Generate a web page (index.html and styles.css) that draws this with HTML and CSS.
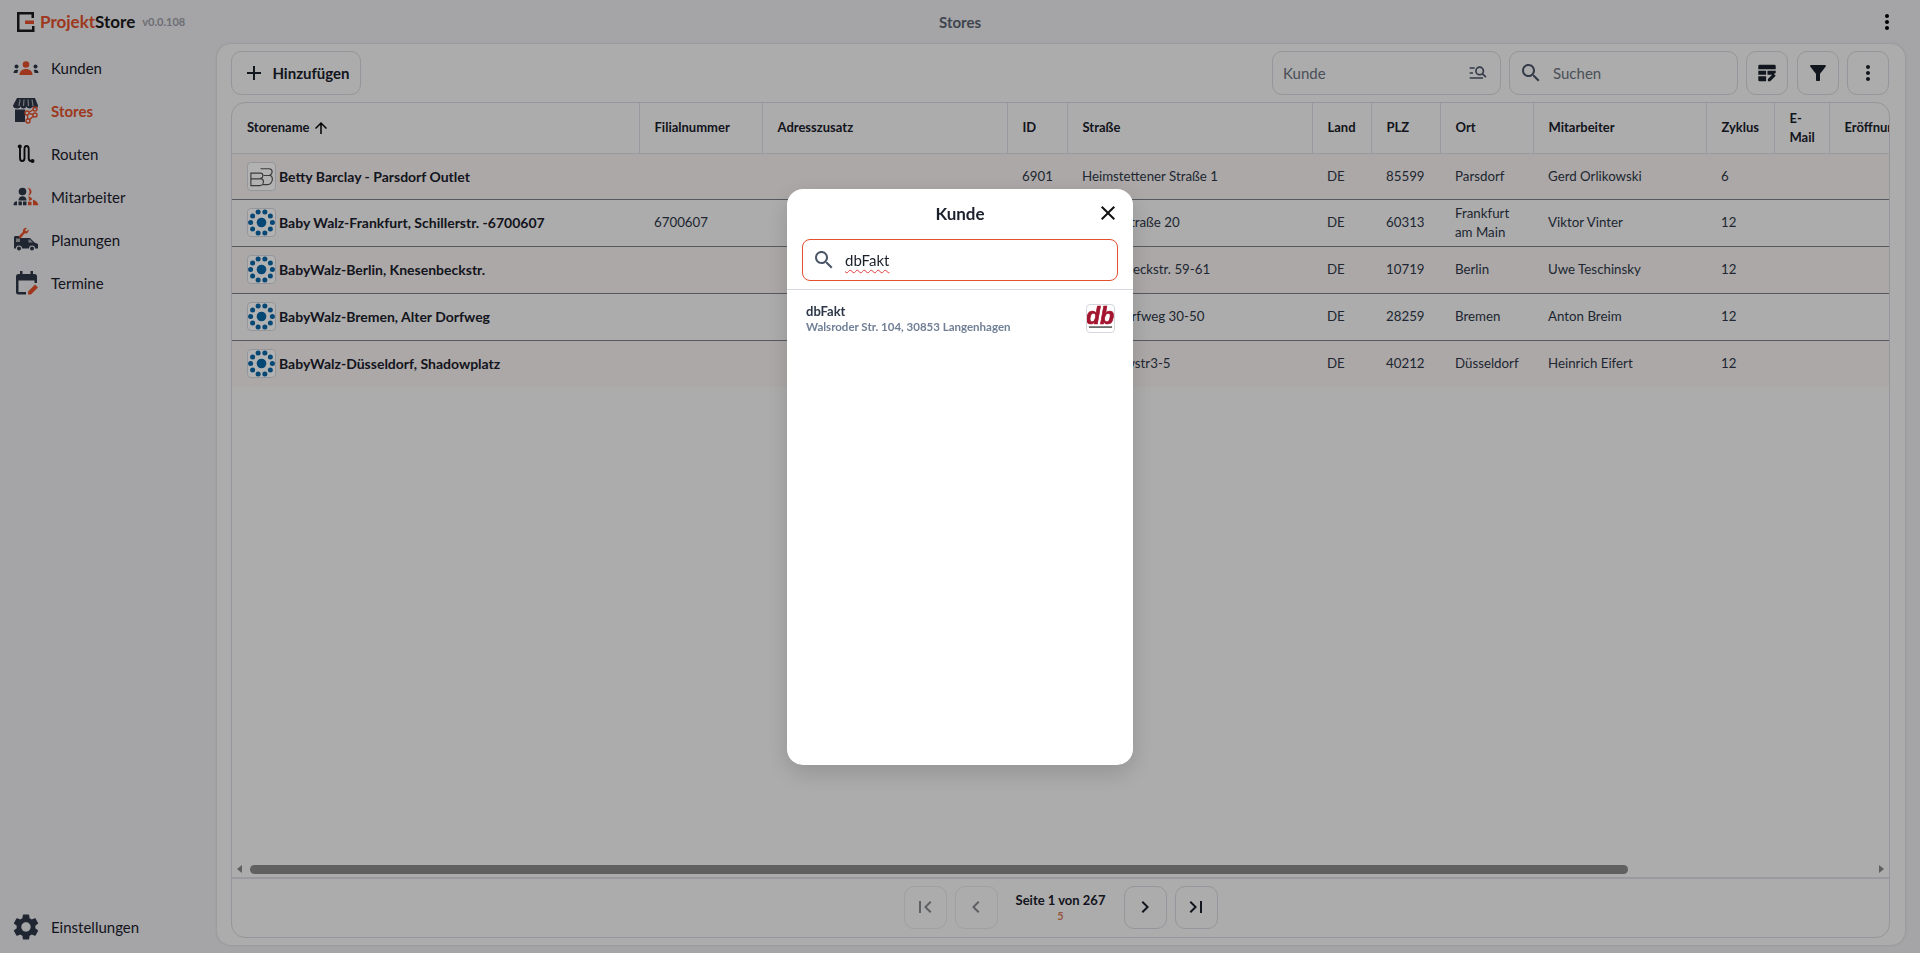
FILE: index.html
```html
<!DOCTYPE html>
<html lang="de">
<head>
    <meta charset="UTF-8">
    <meta name="viewport" content="width=device-width, initial-scale=1.0">
    <title>ProjektStore - Stores</title>
    <link rel="stylesheet" href="styles.css">
</head>
<body>
    <svg class="defs" width="0" height="0">
        <symbol id="babywalz" viewBox="0 0 28 28">
            <circle cx="14" cy="14" r="5"/>
            <circle cx="10.500" cy="3" r="2.600"/><circle cx="17.500" cy="3" r="2.600"/>
            <circle cx="4.800" cy="7.200" r="2.600"/><circle cx="23.200" cy="7.200" r="2.600"/>
            <circle cx="2.700" cy="14" r="2.600"/><circle cx="25.300" cy="14" r="2.600"/>
            <circle cx="4.800" cy="20.800" r="2.600"/><circle cx="23.200" cy="20.800" r="2.600"/>
            <circle cx="10.500" cy="25" r="2.600"/><circle cx="17.500" cy="25" r="2.600"/>
        </symbol>
    </svg>

    <header class="topbar">
        <div class="brand">
            <svg class="brand-logo" viewBox="0 0 20 22" width="20" height="22">
                <path d="M1 1h17v6h-2.500V3.500H3.500v15H16V15h2.500v6H1z" fill="#1a1a1a"/>
                <path d="M9 9.500h9V13H9z" fill="#e2502c"/>
            </svg>
            <span class="brand-name"><span class="accent">Projekt</span>Store</span>
            <span class="brand-version">v0.0.108</span>
        </div>
        <div class="page-title">Stores</div>
        <div class="topbar-menu">
            <svg viewBox="0 0 24 24" width="24" height="24"><path d="M12 8c1.100 0 2-.9 2-2s-.9-2-2-2-2 .9-2 2 .9 2 2 2zm0 2c-1.100 0-2 .9-2 2s.9 2 2 2 2-.9 2-2-.9-2-2-2zm0 6c-1.100 0-2 .9-2 2s.9 2 2 2 2-.9 2-2-.9-2-2-2z"/></svg>
        </div>
    </header>

    <div class="layout">
        <nav class="sidebar">
            <div class="nav-list">
                <a class="nav-item">
                    <svg class="nav-icon" viewBox="0 0 26 26">
                        <circle cx="13" cy="9.500" r="3.300" fill="#e2502c"/>
                        <path d="M6.500 20c0-4 3-6 6.500-6s6.500 2 6.500 6z" fill="#e2502c"/>
                        <circle cx="3.500" cy="11.500" r="2" fill="#2d3748"/><circle cx="22.500" cy="11.500" r="2" fill="#2d3748"/>
                        <path d="M.5 18c0-2.300 1.300-3.300 3-3.300.7 0 1.300.2 1.800.4-.5.9-.8 1.800-.9 2.900zM25.500 18c0-2.300-1.300-3.300-3-3.300-.7 0-1.300.2-1.800.4.5.9.8 1.800.9 2.900z" fill="#2d3748"/>
                    </svg>
                    <span>Kunden</span>
                </a>
                <a class="nav-item active">
                    <svg class="nav-icon" viewBox="0 0 26 26">
                        <path d="M4 0h18l3 7.500c0 2-1.300 3-2.700 3-1.300 0-2.300-.8-2.800-2-.5 1.200-1.600 2-3 2s-2.500-.8-3-2c-.5 1.200-1.600 2-3 2s-2.500-.8-3-2c-.5 1.200-1.500 2-2.800 2C1.300 10.500 0 9.500 0 7.500z" fill="#2d3748"/>
                        <path d="M7 1.500 6 8M11 1.500 10.500 8M15 1.500l.5 6.500M19 1.500 20 8" stroke="#a9a9ad" stroke-width="1.200"/>
                        <path d="M2 11.500h10V24H2z" fill="#2d3748"/>
                        <g fill="none" stroke="#e2502c" stroke-width="1.400">
                            <circle cx="22" cy="11" r="2"/><circle cx="14" cy="15" r="2"/><circle cx="22" cy="17" r="2"/><circle cx="15" cy="23" r="2"/>
                            <path d="M20 12l-4.200 2.200M16 15.300l4 1.200M20.400 18.200l-4 3.400M14.400 17l.4 4"/>
                        </g>
                    </svg>
                    <span>Stores</span>
                </a>
                <a class="nav-item">
                    <svg class="nav-icon" viewBox="0 0 26 26">
                        <path d="M7 6v11c0 2 .8 3 2.200 3s2.300-1 2.300-3V8c0-2 .9-3 2-3 1.300 0 2.200 1 2.200 3v9c0 2 .8 3 2.300 3" fill="none" stroke="#111" stroke-width="1.900"/>
                        <circle cx="6.800" cy="5.500" r="2" fill="#111"/><circle cx="19.500" cy="20" r="2" fill="#111"/>
                    </svg>
                    <span>Routen</span>
                </a>
                <a class="nav-item">
                    <svg class="nav-icon" viewBox="0 0 26 26">
                        <circle cx="9.500" cy="7.500" r="3.800" fill="#2d3748"/>
                        <path d="M14.500 3.500c2.800.6 4 2.300 4 4.300s-1.300 3.500-3.500 4c1-1.100 1.500-2.500 1.500-4 0-1.700-.7-3.100-2-4.300z" fill="#e2502c"/>
                        <path d="M5.500 16.500c0-2.800 1.800-4.300 4-4.300s4 1.500 4 4.300z" fill="#2d3748"/>
                        <path d="M.5 21c0-2.300 1.300-3.700 3.500-3.700v4H1.500c-.6 0-1-.2-1-.3z" fill="#2d3748"/>
                        <path d="M5.500 17.500h3.400v3.800H5.500zM10 17.500h3.500v3.800H10z" fill="#2d3748"/>
                        <path d="M15.500 12.500c2 .2 3.300 1.300 3.800 3l-3.300 1.500c-.1-1.700-.3-3.200-.5-4.500zM15 17.800h3.500v3.500H15zM20 15.800c2.800.6 4.700 2.500 5.500 5.500H20z" fill="#e2502c"/>
                    </svg>
                    <span>Mitarbeiter</span>
                </a>
                <a class="nav-item">
                    <svg class="nav-icon" viewBox="0 0 26 26">
                        <path d="M2 9h4l2 2h9l4.500 4.500 3.500 1.500v4.500h-3a3 3 0 0 0-6 0H9a3 3 0 0 0-6 0H1V10z" fill="#2d3748"/>
                        <path d="M3 11.500h4v3.500H3zM17 12.500h-1.500v3h4.500z" fill="#a9a9ad"/>
                        <circle cx="6" cy="21.500" r="2" fill="#2d3748"/><circle cx="19" cy="21.500" r="2" fill="#2d3748"/>
                        <path d="M5.500 9.500l4.500-4.700C9.500 3 10.500 1 13 .8l1 .2-2 2 1.500 1.500 2-2 .2 1c-.3 2.300-2.300 3.500-4.300 3L7.500 11.500z" fill="#e2502c"/>
                    </svg>
                    <span>Planungen</span>
                </a>
                <a class="nav-item">
                    <svg class="nav-icon" viewBox="0 0 26 26">
                        <path d="M7 1h2.500v3h8V1H20v3h1.500A2.500 2.500 0 0 1 24 6.500V13h-2.500V10.500h-16V22H13v2.500H5.500A2.500 2.500 0 0 1 3 22V6.500A2.500 2.500 0 0 1 5.500 4H7z" fill="#2d3748"/>
                        <path d="M15 24.500v-3l7-7 3 3-7 7z" fill="#e2502c"/>
                    </svg>
                    <span>Termine</span>
                </a>
            </div>
            <a class="nav-item">
                <svg class="nav-icon" viewBox="2 2 20 20" fill="#2d3748"><path d="M19.140 12.940c.04-.3.06-.61.06-.94 0-.32-.02-.64-.07-.94l2.030-1.580c.18-.14.23-.41.12-.61l-1.920-3.320c-.12-.22-.37-.29-.59-.22l-2.390.96c-.5-.38-1.030-.7-1.620-.94l-.36-2.540c-.04-.24-.24-.41-.48-.41h-3.840c-.24 0-.43.17-.47.41l-.36 2.540c-.59.24-1.130.57-1.620.94l-2.390-.96c-.22-.08-.47 0-.59.22L2.740 8.870c-.12.21-.08.47.12.61l2.030 1.580c-.05.3-.09.63-.09.94s.02.64.07.94l-2.030 1.580c-.18.14-.23.41-.12.61l1.920 3.320c.12.22.37.29.59.22l2.390-.96c.5.38 1.030.7 1.620.94l.36 2.540c.05.24.24.41.48.41h3.840c.24 0 .44-.17.47-.41l.36-2.540c.59-.24 1.130-.56 1.620-.94l2.390.96c.22.08.47 0 .59-.22l1.920-3.320c.12-.22.07-.47-.12-.61l-2.010-1.580zM12 15.600c-1.980 0-3.600-1.620-3.600-3.600s1.620-3.600 3.600-3.600 3.600 1.620 3.600 3.600-1.620 3.600-3.600 3.600z"/></svg>
                <span>Einstellungen</span>
            </a>
        </nav>

        <main class="panel">
            <div class="toolbar">
                <button class="btn btn-add">
                    <svg viewBox="0 0 24 24" width="24" height="24"><path d="M19 13h-6v6h-2v-6H5v-2h6V5h2v6h6v2z"/></svg>
                    Hinzufügen
                </button>
                <div class="toolbar-right">
                    <div class="field field-kunde">
                        <span>Kunde</span>
                        <svg viewBox="0 0 24 24" width="20" height="20" fill="none" stroke="#4a5568" stroke-width="2"><path d="M2 6h6M2 12h4M2 18h16"/><circle cx="14" cy="9.500" r="4.500"/><path d="M17.500 13l4 4"/></svg>
                    </div>
                    <div class="field field-search">
                        <svg viewBox="0 0 24 24" width="24" height="24" fill="#4a5568"><path d="M15.500 14h-.79l-.28-.27C15.410 12.590 16 11.110 16 9.500 16 5.910 13.090 3 9.500 3S3 5.910 3 9.500 5.910 16 9.500 16c1.610 0 3.090-.59 4.230-1.570l.27.28v.79l5 4.990L20.490 19l-4.990-5zm-6 0C7.010 14 5 11.990 5 9.500S7.010 5 9.500 5 14 7.010 14 9.500 11.990 14 9.500 14z"/></svg>
                        <span>Suchen</span>
                    </div>
                    <button class="btn btn-icon">
                        <svg viewBox="0 0 24 24" width="22" height="22" fill="#1a202c"><path d="M4 3h16a1.500 1.500 0 0 1 1.500 1.500V8h-19V4.500A1.500 1.500 0 0 1 4 3zM2.500 9.500H11V14H2.500zM12.500 9.500h9v2.500l-4 2h-5zM2.500 15.500H11V21H4a1.500 1.500 0 0 1-1.500-1.500zM13 21v-2.500l6-6 2.500 2.500-6 6z"/></svg>
                    </button>
                    <button class="btn btn-icon btn-filter">
                        <svg viewBox="0 0 24 24" width="24" height="24" fill="#1a202c"><path d="M4.250 5.610C6.270 8.200 10 13 10 13v6c0 .55.45 1 1 1h2c.55 0 1-.45 1-1v-6s3.720-4.800 5.740-7.390C20.250 4.950 19.780 4 18.950 4H5.040c-.83 0-1.300.95-.79 1.610z"/></svg>
                    </button>
                    <button class="btn btn-icon">
                        <svg viewBox="0 0 24 24" width="24" height="24" fill="#1a202c"><path d="M12 8c1.100 0 2-.9 2-2s-.9-2-2-2-2 .9-2 2 .9 2 2 2zm0 2c-1.100 0-2 .9-2 2s.9 2 2 2 2-.9 2-2-.9-2-2-2zm0 6c-1.100 0-2 .9-2 2s.9 2 2 2 2-.9 2-2-.9-2-2-2z"/></svg>
                    </button>
                </div>
            </div>

            <section class="table-box">
                <div class="table-scroll">
                    <table class="stores">
                        <colgroup>
                            <col class="c-name"><col class="c-filial"><col class="c-adr"><col class="c-id"><col class="c-str"><col class="c-land"><col class="c-plz"><col class="c-ort"><col class="c-mit"><col class="c-zyk"><col class="c-mail"><col class="c-open">
                        </colgroup>
                        <thead>
                            <tr>
                                <th><span class="sort">Storename <svg viewBox="0 0 24 24" width="18" height="18"><path d="M4 12l1.410 1.410L11 7.830V20h2V7.830l5.580 5.590L20 12l-8-8-8 8z"/></svg></span></th>
                                <th>Filialnummer</th><th>Adresszusatz</th><th>ID</th><th>Straße</th><th>Land</th><th>PLZ</th><th>Ort</th><th>Mitarbeiter</th><th>Zyklus</th><th>E-Mail</th><th>Eröffnung</th>
                            </tr>
                        </thead>
                        <tbody>
                            <tr>
                                <td><div class="store"><span class="store-logo"><svg viewBox="0 0 28 28" width="27" height="27" fill="none" stroke="#555" stroke-width="1.200"><path d="M3 10.500h10c1.500 0 2.500 1 2.500 2.500s-1 2.500-2.500 3c1.500.3 3 1.500 3 3.500s-1.500 4-3.500 4H3zM3 16.500h10"/><path d="M13 6h9c2 0 3 1.200 3 3.200 0 1.800-1 3-2.500 3.500 1.700.4 2.800 1.800 2.800 4 0 3-2 5.800-5 5.800h-5M16 13h6.500"/></svg></span>Betty Barclay - Parsdorf Outlet</div></td>
                                <td></td><td></td><td>6901</td><td>Heimstettener Straße 1</td><td>DE</td><td>85599</td><td>Parsdorf</td><td>Gerd Orlikowski</td><td>6</td><td></td><td></td>
                            </tr>
                            <tr>
                                <td><div class="store"><span class="store-logo"><svg class="bw" width="27" height="27"><use href="#babywalz"/></svg></span>Baby Walz-Frankfurt, Schillerstr. -6700607</div></td>
                                <td>6700607</td><td></td><td></td><td>Schillerstraße 20</td><td>DE</td><td>60313</td><td>Frankfurt am Main</td><td>Viktor Vinter</td><td>12</td><td></td><td></td>
                            </tr>
                            <tr>
                                <td><div class="store"><span class="store-logo"><svg class="bw" width="27" height="27"><use href="#babywalz"/></svg></span>BabyWalz-Berlin, Knesenbeckstr.</div></td>
                                <td></td><td></td><td></td><td>Knesenbeckstr. 59-61</td><td>DE</td><td>10719</td><td>Berlin</td><td>Uwe Teschinsky</td><td>12</td><td></td><td></td>
                            </tr>
                            <tr>
                                <td><div class="store"><span class="store-logo"><svg class="bw" width="27" height="27"><use href="#babywalz"/></svg></span>BabyWalz-Bremen, Alter Dorfweg</div></td>
                                <td></td><td></td><td></td><td>Alter Dorfweg 30-50</td><td>DE</td><td>28259</td><td>Bremen</td><td>Anton Breim</td><td>12</td><td></td><td></td>
                            </tr>
                            <tr>
                                <td><div class="store"><span class="store-logo"><svg class="bw" width="27" height="27"><use href="#babywalz"/></svg></span>BabyWalz-Düsseldorf, Shadowplatz</div></td>
                                <td></td><td></td><td></td><td>Schadowstr3-5</td><td>DE</td><td>40212</td><td>Düsseldorf</td><td>Heinrich Eifert</td><td>12</td><td></td><td></td>
                            </tr>
                        </tbody>
                    </table>
                </div>
                <div class="hscroll">
                    <span class="arrow arrow-left"></span>
                    <div class="hscroll-track"><div class="hscroll-thumb"></div></div>
                    <span class="arrow arrow-right"></span>
                </div>
                <div class="pager">
                    <button class="btn btn-page" disabled><svg viewBox="0 0 24 24" width="24" height="24"><path d="M18.410 16.590L13.820 12l4.590-4.590L17 6l-6 6 6 6zM6 6h2v12H6z"/></svg></button>
                    <button class="btn btn-page" disabled><svg viewBox="0 0 24 24" width="24" height="24"><path d="M15.410 7.410L14 6l-6 6 6 6 1.410-1.410L10.830 12z"/></svg></button>
                    <div class="page-info">
                        <div>Seite 1 von 267</div>
                        <div class="page-count">5</div>
                    </div>
                    <button class="btn btn-page"><svg viewBox="0 0 24 24" width="24" height="24"><path d="M10 6L8.590 7.410 13.170 12l-4.580 4.590L10 18l6-6z"/></svg></button>
                    <button class="btn btn-page"><svg viewBox="0 0 24 24" width="24" height="24"><path d="M5.590 7.410L10.180 12l-4.590 4.590L7 18l6-6-6-6zM16 6h2v12h-2z"/></svg></button>
                </div>
            </section>
        </main>
    </div>

    <div class="overlay">
        <div class="modal">
            <div class="modal-head">
                <h2>Kunde</h2>
                <svg class="modal-close" viewBox="0 0 24 24" width="24" height="24"><path d="M19 6.410L17.590 5 12 10.590 6.410 5 5 6.410 10.590 12 5 17.590 6.410 19 12 13.410 17.590 19 19 17.590 13.410 12z"/></svg>
            </div>
            <div class="modal-search">
                <svg viewBox="0 0 24 24" width="24" height="24" fill="#4a5568"><path d="M15.500 14h-.79l-.28-.27C15.410 12.590 16 11.110 16 9.500 16 5.910 13.090 3 9.500 3S3 5.910 3 9.500 5.910 16 9.500 16c1.610 0 3.090-.59 4.230-1.570l.27.28v.79l5 4.990L20.490 19l-4.990-5zm-6 0C7.010 14 5 11.990 5 9.500S7.010 5 9.500 5 14 7.010 14 9.500 11.990 14 9.500 14z"/></svg>
                <span class="typo">dbFakt</span>
            </div>
            <div class="result">
                <div class="result-text">
                    <div class="result-name">dbFakt</div>
                    <div class="result-addr">Walsroder Str. 104, 30853 Langenhagen</div>
                </div>
                <span class="result-logo">
                    <svg viewBox="0 0 28 28" width="27" height="27">
                        <text class="db-mark" x="13.500" y="19.500">db</text>
                        <rect x="2" y="22" width="24" height="1.800" fill="#666"/>
                    </svg>
                </span>
            </div>
        </div>
    </div>
</body>
</html>
```

FILE: styles.css
```css
* {
    margin: 0;
    padding: 0;
    box-sizing: border-box;
}

body {
    height: 100vh;
    display: flex;
    flex-direction: column;
    overflow: hidden;
    background-color: #ececef;
    color: #1a202c;
    font-family: Lato, "Noto Sans", "Liberation Sans", sans-serif;
    font-size: 13px;
}

.defs {
    position: absolute;
}

/* Kopfzeile */
.topbar {
    height: 43px;
    flex: none;
    display: grid;
    grid-template-columns: 1fr auto 1fr;
    align-items: center;
}

.brand {
    display: flex;
    align-items: center;
    padding-left: 16px;
}

.brand-logo {
    margin-right: 4px;
}

.brand-name {
    font-size: 17px;
    font-weight: 700;
    color: #1a1a1a;
}

.brand-name .accent {
    color: #e2502c;
}

.brand-version {
    margin-left: 7px;
    font-size: 11px;
    font-weight: 700;
    color: #9a9fa8;
}

.page-title {
    font-size: 15px;
    font-weight: 700;
    color: #5b6472;
}

.topbar-menu {
    display: flex;
    justify-content: flex-end;
    padding-right: 21px;
}

.layout {
    flex: 1;
    min-height: 0;
    display: flex;
}

/* Seitenleiste */
.sidebar {
    width: 217px;
    flex: none;
    display: flex;
    flex-direction: column;
    justify-content: space-between;
    padding: 3px 0 5px;
}

.nav-item {
    height: 43px;
    display: flex;
    align-items: center;
    gap: 12px;
    padding-left: 13px;
    font-size: 15px;
    color: #1a202c;
}

.nav-item.active {
    color: #e2502c;
    font-weight: 700;
}

.nav-icon {
    width: 26px;
    height: 26px;
    flex: none;
}

/* Hauptbereich */
.panel {
    flex: 1;
    min-width: 0;
    margin: 1px 15px 8px 0;
    padding: 7px 15px 7px 14px;
    display: flex;
    flex-direction: column;
    gap: 7px;
    background-color: #f6f6f6;
    border-radius: 14px;
    box-shadow: 0 0 3px rgba(0, 0, 0, 0.15);
}

.toolbar {
    height: 44px;
    flex: none;
    display: flex;
    justify-content: space-between;
}

.toolbar-right {
    display: flex;
    gap: 8px;
    padding-right: 1px;
}

.btn {
    display: flex;
    align-items: center;
    justify-content: center;
    background: transparent;
    border: 1px solid #d5d7de;
    border-radius: 10px;
    color: #1a202c;
    font-family: inherit;
}

.btn svg {
    fill: #1a202c;
}

.btn-add {
    width: 130px;
    gap: 6px;
    font-size: 15px;
    font-weight: 700;
}

.btn-icon {
    width: 42px;
}

.btn-filter {
    margin-left: 1px;
}

.field {
    display: flex;
    align-items: center;
    width: 229px;
    border: 1px solid #d5d7de;
    border-radius: 10px;
    font-size: 15px;
    color: #6b7280;
}

.field-kunde {
    justify-content: space-between;
    padding: 0 12px 0 10px;
}

.field-search {
    gap: 10px;
    padding-left: 9px;
}

/* Tabelle */
.table-box {
    flex: 1;
    min-height: 0;
    display: flex;
    flex-direction: column;
    border: 1px solid #d5d7de;
    border-radius: 14px;
    overflow: hidden;
}

.table-scroll {
    flex: 1;
    min-height: 0;
    overflow: hidden;
}

.stores {
    width: 1700px;
    table-layout: fixed;
    border-collapse: collapse;
}

.c-name { width: 407px; }
.c-filial { width: 123px; }
.c-adr { width: 245px; }
.c-id { width: 60px; }
.c-str { width: 245px; }
.c-land { width: 59px; }
.c-plz { width: 69px; }
.c-ort { width: 93px; }
.c-mit { width: 173px; }
.c-zyk { width: 68px; }
.c-mail { width: 55px; }
.c-open { width: 103px; }

.stores th {
    height: 50px;
    padding: 0 15px;
    text-align: left;
    font-size: 13px;
    font-weight: 700;
    line-height: 19px;
    white-space: normal;
    overflow: hidden;
    border-right: 1px solid #dcdce4;
    border-bottom: 1px solid #dcdce4;
}

.stores th:nth-child(12) {
    white-space: nowrap;
    border-right: none;
}

.sort {
    display: inline-flex;
    align-items: center;
    gap: 3px;
}

.stores td {
    height: 47px;
    padding: 0 15px;
    font-size: 13.300px;
    line-height: 19px;
    color: #2d3748;
    border-bottom: 1px solid #7f8088;
}

.stores tbody tr:first-child td {
    height: 46px;
}

.stores tbody tr:nth-child(odd) {
    background-color: #f7f1f0;
}

.stores tbody tr:last-child td {
    border-bottom: none;
}

.store {
    display: flex;
    align-items: center;
    gap: 3px;
    font-size: 14px;
    font-weight: 700;
    color: #1a202c;
}

.store-logo {
    width: 29px;
    height: 29px;
    flex: none;
    display: flex;
    align-items: center;
    justify-content: center;
    background-color: #fff;
    border: 1px solid #d5d7de;
    border-radius: 4px;
}

.bw {
    fill: #0a67a8;
}

/* Bildlaufleiste */
.hscroll {
    height: 18px;
    flex: none;
    display: flex;
    align-items: center;
    padding: 0 5px;
    border-bottom: 2px solid #dcdce4;
}

.hscroll-track {
    flex: 1;
    padding: 0 251px 0 8px;
}

.hscroll-thumb {
    height: 9px;
    background-color: #8a8a8a;
    border-radius: 5px;
}

.arrow {
    width: 0;
    height: 0;
    border-top: 4px solid transparent;
    border-bottom: 4px solid transparent;
}

.arrow-left {
    border-right: 5px solid #8a8a8a;
}

.arrow-right {
    border-left: 5px solid #8a8a8a;
}

/* Seitenwechsel */
.pager {
    height: 58px;
    flex: none;
    display: flex;
    align-items: center;
    justify-content: center;
    gap: 8px;
    padding-bottom: 2px;
}

.btn-page {
    width: 43px;
    height: 43px;
}

.btn-page:disabled {
    opacity: 0.5;
}

.page-info {
    width: 110px;
    text-align: center;
    font-size: 13px;
    font-weight: 700;
    line-height: 17px;
}

.page-count {
    font-size: 11px;
    line-height: 13px;
    color: #d9805f;
}

/* Dialog */
.overlay {
    position: fixed;
    inset: 0;
    background-color: rgba(0, 0, 0, 0.3);
}

.modal {
    position: absolute;
    left: 787px;
    top: 189px;
    width: 346px;
    height: 576px;
    background-color: #fff;
    border-radius: 16px;
    box-shadow: 0 8px 24px rgba(0, 0, 0, 0.15);
}

.modal-head {
    height: 50px;
    position: relative;
    display: flex;
    align-items: center;
    justify-content: center;
    padding-bottom: 1px;
}

.modal-head h2 {
    font-size: 17px;
    font-weight: 700;
    color: #1a202c;
}

.modal-close {
    position: absolute;
    right: 13px;
    top: 12px;
    fill: #111;
}

.modal-search {
    height: 42px;
    margin: 0 15px;
    display: flex;
    align-items: center;
    gap: 9px;
    padding-left: 9px;
    border: 1px solid #e2502c;
    border-radius: 8px;
    font-size: 15px;
    color: #1a202c;
}

.typo {
    text-decoration: underline wavy #e53e3e 1px;
    text-underline-offset: 3px;
}

.result {
    margin-top: 8px;
    padding: 13px 18px 0 19px;
    display: flex;
    justify-content: space-between;
    align-items: center;
    border-top: 1px solid #d8d9de;
}

.result-name {
    font-size: 13px;
    font-weight: 700;
    line-height: 17px;
    color: #2d3748;
}

.result-addr {
    font-size: 11.500px;
    font-weight: 700;
    line-height: 14px;
    color: #718096;
}

.result-logo {
    width: 29px;
    height: 29px;
    margin-top: -1px;
    display: flex;
    align-items: center;
    justify-content: center;
    border: 1px solid #d5d7de;
    border-radius: 4px;
}

.db-mark {
    text-anchor: middle;
    font-family: "Liberation Sans", sans-serif;
    font-size: 24px;
    font-style: italic;
    font-weight: 700;
    fill: #a3142e;
    stroke: #a3142e;
    stroke-width: 0.7;
}
```
